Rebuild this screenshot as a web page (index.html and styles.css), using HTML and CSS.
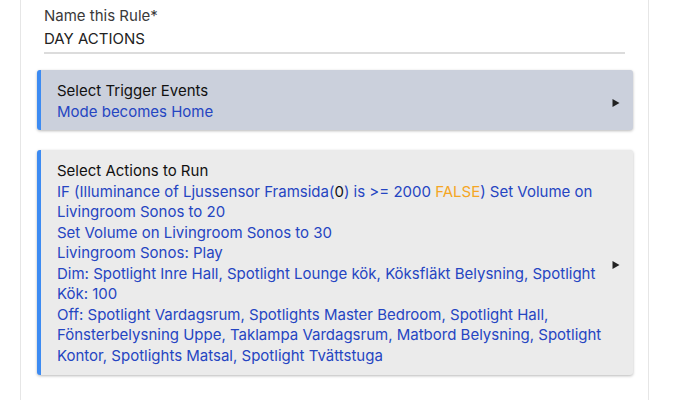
FILE: index.html
```html
<!DOCTYPE html>
<html>
<head>
<meta charset="utf-8">
<link rel="stylesheet" href="styles.css">
</head>
<body>
<div class="page">
  <div class="field">
    <div class="field-label">Name this Rule*</div>
    <div class="field-value">DAY ACTIONS</div>
  </div>
  <div class="card card-trigger">
    <div class="card-text">
      <div class="card-title">Select Trigger Events</div>
      <div class="card-desc">Mode becomes Home</div>
    </div>
    <svg class="arrow" width="8" height="8" viewBox="0 0 8 8"><path d="M0.5 0 L7.5 4 L0.5 8 Z" fill="#222"/></svg>
  </div>
  <div class="card card-actions">
    <div class="card-text">
      <div class="card-title">Select Actions to Run</div>
      <div class="card-desc">IF (Illuminance of Ljussensor Framsida(<span class="num">0</span>) is &gt;= 2000 <span class="false">FALSE</span>) Set Volume on Livingroom Sonos to 20</div>
      <div class="card-desc">Set Volume on Livingroom Sonos to 30</div>
      <div class="card-desc">Livingroom Sonos: Play</div>
      <div class="card-desc">Dim: Spotlight Inre Hall, Spotlight Lounge kök, Köksfläkt Belysning, Spotlight Kök: 100</div>
      <div class="card-desc">Off: Spotlight Vardagsrum, Spotlights Master Bedroom, Spotlight Hall, Fönsterbelysning Uppe, Taklampa Vardagsrum, Matbord Belysning, Spotlight Kontor, Spotlights Matsal, Spotlight Tvättstuga</div>
    </div>
    <svg class="arrow" width="8" height="8" viewBox="0 0 8 8"><path d="M0.5 0 L7.5 4 L0.5 8 Z" fill="#222"/></svg>
  </div>
</div>
</body>
</html>
```
FILE: styles.css
```css
html, body {
  margin: 0;
  padding: 0;
  background: #ffffff;
}
body {
  font-family: Inter, "Liberation Sans", Arial, sans-serif;
  font-size: 15px;
  line-height: 20.5px;
}
.page {
  margin-left: 20px;
  width: 629px;
  min-height: 400px;
  border-left: 1px solid #e6e6e6;
  border-right: 1px solid #e6e6e6;
  padding: 5px 15px 0 16px;
  box-sizing: border-box;
}
.field {
  margin: 0 8px 16px 7px;
  border-bottom: 2px solid #dcdcdc;
  padding-bottom: 2px;
}
.field-label {
  color: #3a3a3a;
  line-height: 22px;
}
.field-value {
  color: #222;
  line-height: 23px;
}
.card {
  display: flex;
  align-items: center;
  border-left: 4px solid #3d8bf2;
  border-radius: 3px;
  box-shadow: 0 1px 3px rgba(0, 0, 0, 0.28);
  padding: 11px 13px 8px 16px;
}
.card-trigger {
  background: #cbd0dc;
  margin-bottom: 20px;
}
.card-actions {
  background: #ebebeb;
  padding-top: 11px;
  padding-bottom: 9px;
}
.card-text {
  flex: 1;
  margin-right: 3px;
}
.card-title {
  color: #111;
}
.card-desc {
  color: #2545c2;
}
.num {
  color: #111;
}
.false {
  color: #f5a623;
}
.arrow {
  flex: none;
  margin-top: 2px;
}
```
